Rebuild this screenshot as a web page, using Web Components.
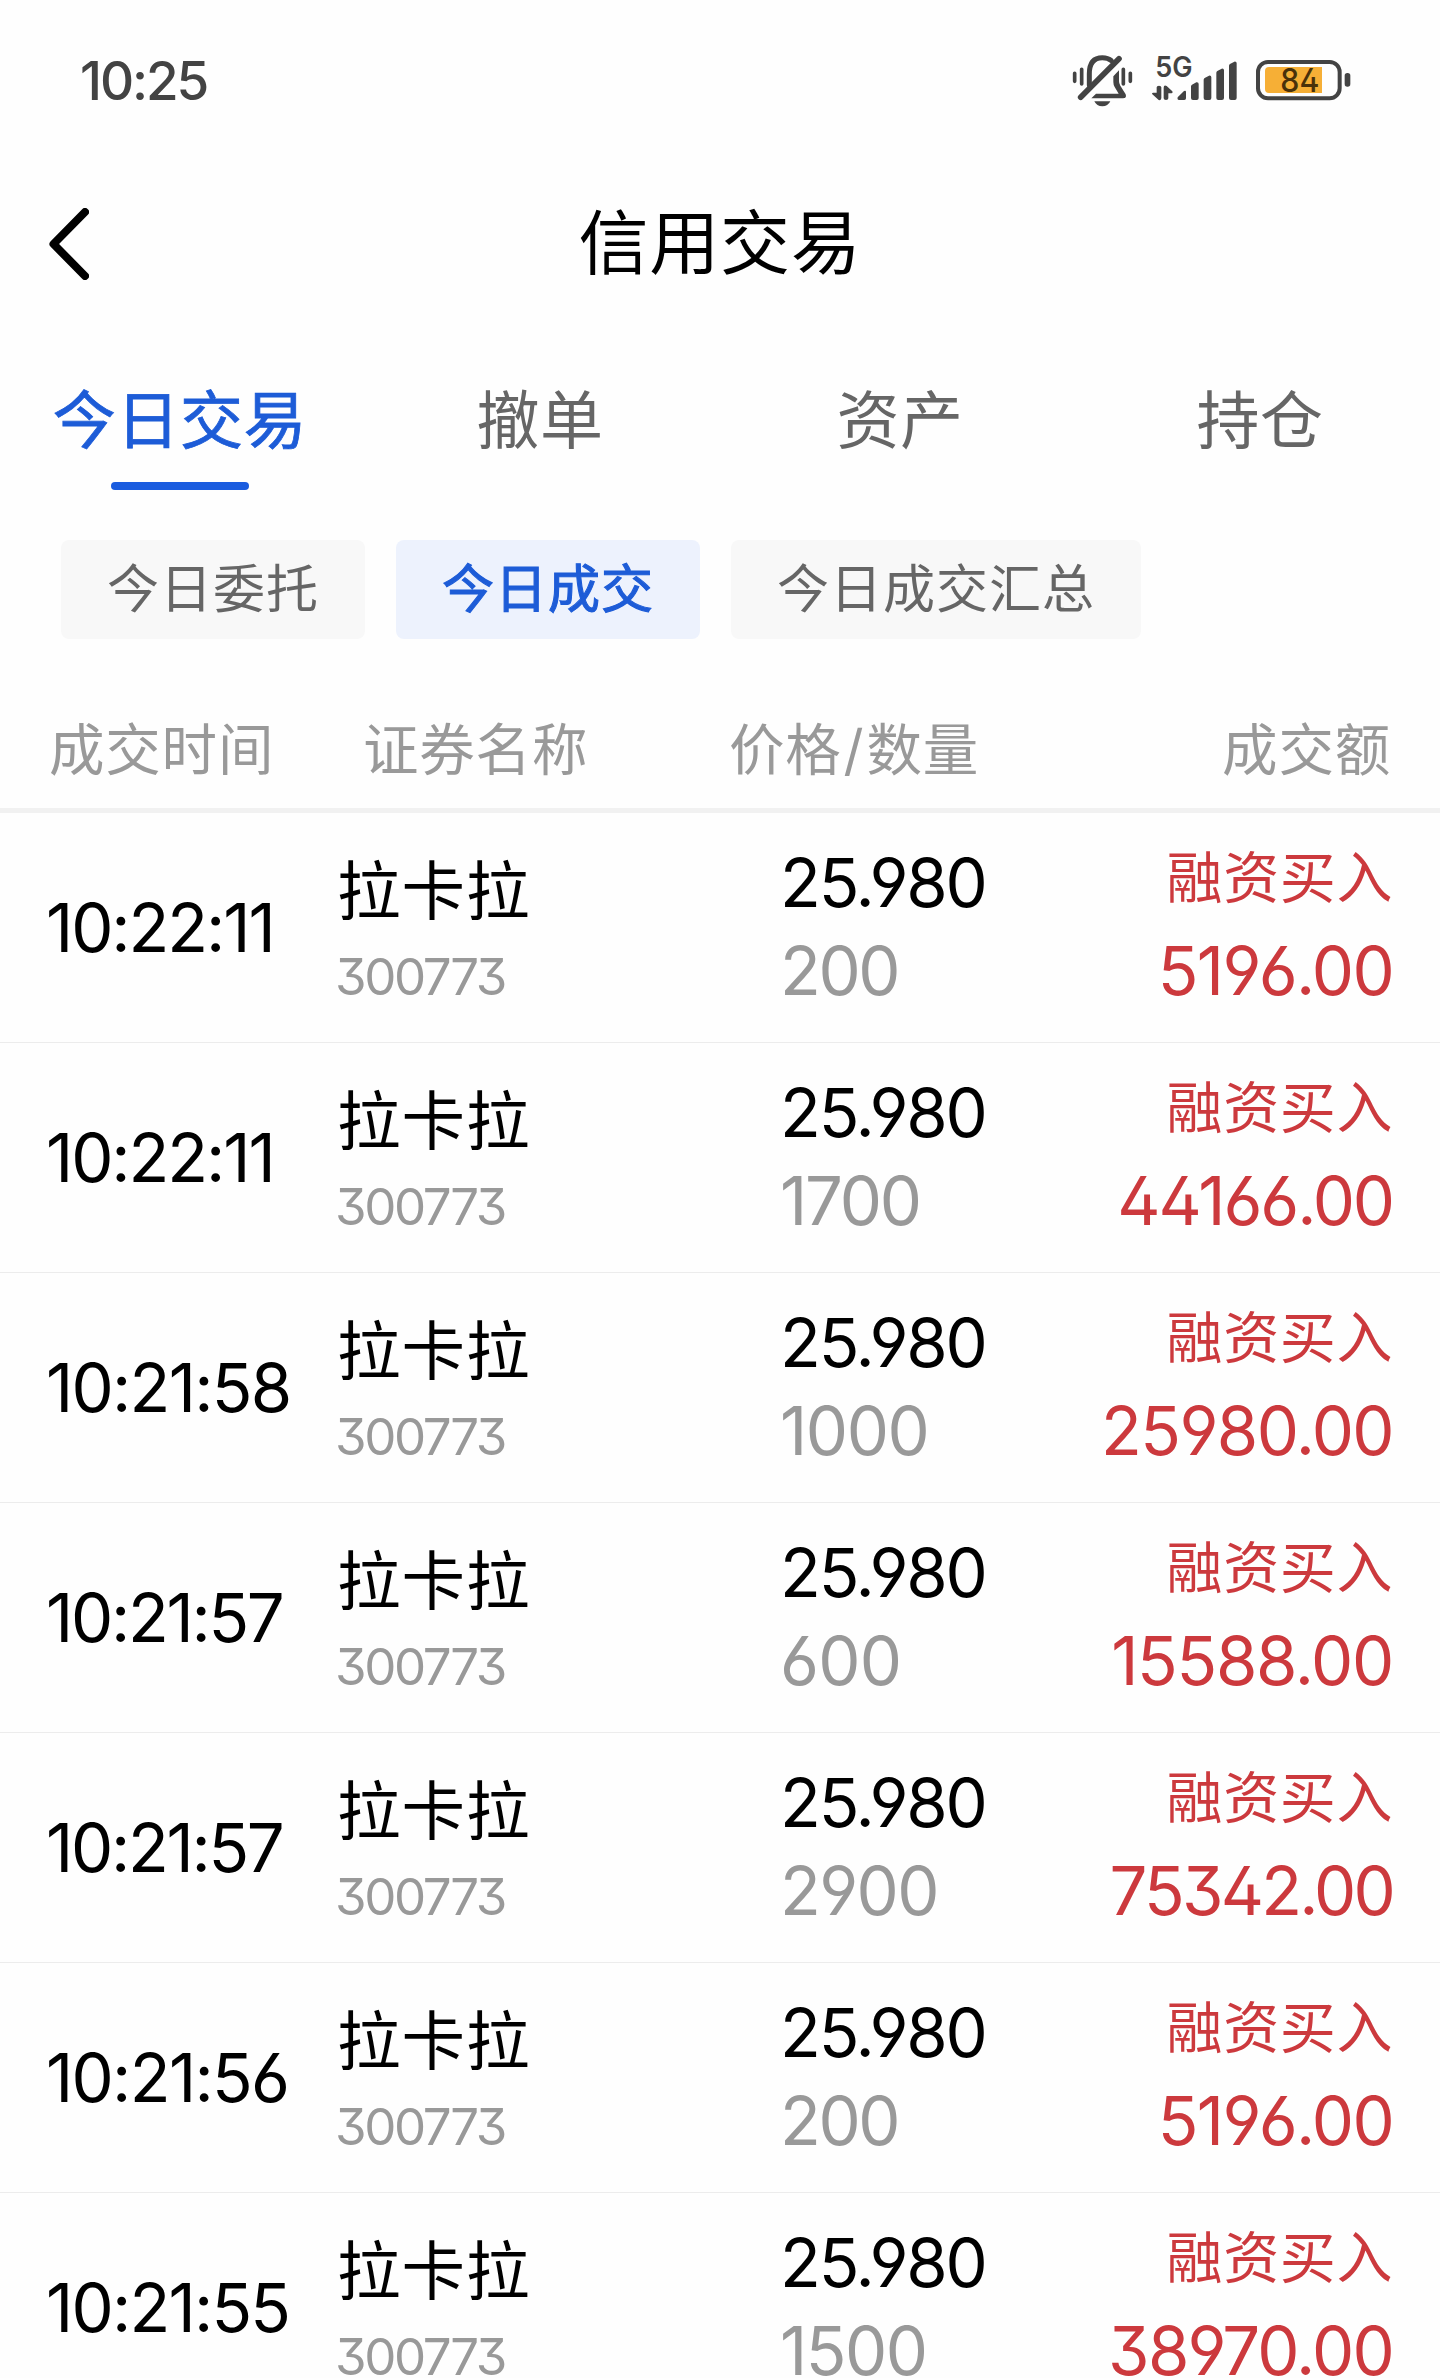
<!DOCTYPE html>
<html lang="zh-CN">
<head>
<meta charset="utf-8">
<title>信用交易</title>
<style>
html,body{margin:0;background:#fefefe}
body{height:2378px;overflow:hidden;font-family:Inter,"Noto Sans CJK SC",sans-serif;font-feature-settings:"ss01","cv05","cv06","cv09";color:#000;-webkit-font-smoothing:antialiased}
</style>
</head>
<body>
<trade-app></trade-app>
<script>
const define=(name,html)=>customElements.define(name,class extends HTMLElement{
  constructor(){super();this.attachShadow({mode:'open'});}
  connectedCallback(){this.shadowRoot.innerHTML=typeof html==='function'?html(this):html;}
});

define('status-bar',`<style>
:host{display:flex;height:160px;box-sizing:border-box;padding:40px 70px 0 80px;justify-content:space-between;color:#434343}
.clock{font-size:53px;font-weight:500;line-height:82px;letter-spacing:-2.1px}
svg{display:block;width:320px;height:80px}
text{font-family:Inter,sans-serif}
</style>
<span class="clock">10:25</span>
<svg viewBox="0 0 960 240" fill="#434343">
  <g fill="none" stroke="#434343" stroke-linecap="round" stroke-linejoin="round">
    <path d="M118 135V101Q118 53 157 53Q174 53 184 62" stroke-width="15"/>
    <path d="M92 172L207 56" stroke-width="17"/>
    <path d="M74 100V124M95 88V132M220 88V132M241 100V124" stroke-width="11"/>
  </g>
  <path d="M190 109L207 91V124Q207 131 211 137L227 163Q231 175 219 175H124L138 161H206L194 141Q190 134 190 126Z"/>
  <path d="M133 184H181Q174 199 157 199Q140 199 133 184Z"/>
  <text x="316" y="111" font-size="86" font-weight="600" textLength="112" lengthAdjust="spacingAndGlyphs">5G</text>
  <path d="M320 142Q320 137 327 137Q334 137 334 142V174Q334 182 326 180L307 163Q304 158 309 158H320ZM341 143Q341 134 350 138L367 154Q370 159 365 160H355V175Q355 180 348 180Q341 180 341 175Z"/>
  <path d="M383 172L402 153Q408 150 408 156V175Q408 180 403 180H387Q381 180 383 172ZM423 139Q423 136 426 134L439 127Q446 126 446 132V174Q446 180 440 180H429Q423 180 423 174ZM461 119Q461 116 464 114L477 107Q484 106 484 112V174Q484 180 478 180H467Q461 180 461 174ZM499 98Q499 95 502 93L515 86Q522 85 522 91V174Q522 180 516 180H505Q499 180 499 174ZM537 77Q537 74 540 72L553 65Q560 64 560 70V174Q560 180 554 180H543Q537 180 537 174Z"/>
  <rect x="624" y="66" width="245" height="109" rx="30" fill="none" stroke="#434343" stroke-width="12"/>
  <path d="M657 81H816V159H657Q645 159 645 147V93Q645 81 657 81Z" fill="#f6af36"/>
  <rect x="884" y="99" width="17" height="41" rx="8"/>
  <text x="691" y="156" font-size="97" font-weight="500" fill="#49310a" textLength="117" lengthAdjust="spacingAndGlyphs">84</text>
</svg>`);

define('nav-bar',`<style>
:host{display:grid;grid-template-columns:120px 1fr 120px;height:167px;margin-bottom:-2px;align-items:center}
svg{display:block;width:40px;height:72px;margin-left:49px}
h1{margin:0;text-align:center;font-size:70px;font-weight:400;line-height:100px;letter-spacing:.8px}
</style>
<svg viewBox="0 0 40 72" fill="none" stroke="#000" stroke-width="8" stroke-linecap="round" stroke-linejoin="round"><path d="M36 4L4.500 36L36 68"/></svg>
<h1><slot></slot></h1>`);

define('tab-item',`<style>
:host{display:flex;flex-direction:column;align-items:center;color:#666}
span{font-size:63px;line-height:100px;letter-spacing:.6px}
i{width:138px;height:8px;border-radius:4px;margin-top:12px}
:host([active]){color:#1d5cd7}
:host([active]) span{-webkit-text-stroke:.8px currentColor}
:host([active]) i{background:#1a5cdf}
</style><span><slot></slot></span><i></i>`);

define('tab-bar',`<style>
:host{display:grid;grid-template-columns:repeat(4,1fr);height:170px;padding-top:45px;box-sizing:border-box}
</style><slot></slot>`);

define('filter-chip',`<style>
:host{display:block;height:99px;line-height:99px;padding:0 46px;border-radius:8px;background:#f8f8f8;color:#666;font-size:52px;letter-spacing:1px}
:host([active]){background:#edf2fd;color:#1d5cd7;-webkit-text-stroke:1.1px currentColor}
</style><slot></slot>`);

define('filter-row',`<style>
:host{display:flex;gap:31px;padding:45px 61px 0;height:145px}
</style><slot></slot>`);

define('table-head',`<style>
:host{display:grid;grid-template-columns:314px 366px 1fr auto;padding:0 49px 0 49px;height:123px;line-height:129px;border-bottom:5px solid #f1f1f1;color:#999;font-size:55.500px;letter-spacing:.8px}
.price b{font-weight:400;padding:0 2px}
</style><span>成交时间</span><span>证券名称</span><span class="price">价格<b>/</b>数量</span><span>成交额</span>`);

define('trade-row',el=>{const a=n=>el.getAttribute(n);const [tt,tq,ta]=a('tracking').split(' ');return `<style>
:host{display:grid;grid-template-columns:291px 443px 1fr auto;height:229px;padding:0 47px 0 46px;border-bottom:1px solid #ececec;font-size:67px;white-space:nowrap}
.time{line-height:229px;height:229px;letter-spacing:${tt}px}
div{display:flex;flex-direction:column}
.stock{padding-top:34px}.name{font-size:63.500px;line-height:88px;letter-spacing:1px}
.code{font-size:51px;line-height:84px;color:#999;letter-spacing:-2.4px;margin-left:-2px}
.price{padding-top:26px;line-height:88px;letter-spacing:-2.1px}.qty{color:#999;letter-spacing:${tq}px}
.sum{padding-top:25px;align-items:flex-end;color:#cc393d}
.op{font-size:56px;line-height:80px;letter-spacing:.6px}.amt{line-height:106px;letter-spacing:${ta}px}
</style>
<span class="time">${a('time')}</span>
<div class="stock"><span class="name">${a('name')}</span><span class="code">${a('code')}</span></div>
<div class="price"><span>${a('price')}</span><span class="qty">${a('qty')}</span></div>
<div class="sum"><span class="op">${a('op')}</span><span class="amt">${a('amount')}</span></div>`});

const trades=[
  ['10:22:11','200','5196.00','-2.1 -2.4 -1.7'],
  ['10:22:11','1700','44166.00','-2.1 -2.2 -2.1'],
  ['10:21:58','1000','25980.00','-1.75 -1.4 -1.6'],
  ['10:21:57','600','15588.00','-2.3 -.8 -1.3'],
  ['10:21:57','2900','75342.00','-2.3 -1.6 -2.8'],
  ['10:21:56','200','5196.00','-1.7 -2.4 -1.7'],
  ['10:21:55','1500','38970.00','-1.8 -1.5 -1.75']];

define('trade-app',`<style>:host{display:block;width:1440px;height:2378px;overflow:hidden}</style>
<status-bar></status-bar>
<nav-bar>信用交易</nav-bar>
<tab-bar><tab-item active>今日交易</tab-item><tab-item>撤单</tab-item><tab-item>资产</tab-item><tab-item>持仓</tab-item></tab-bar>
<filter-row><filter-chip>今日委托</filter-chip><filter-chip active>今日成交</filter-chip><filter-chip>今日成交汇总</filter-chip></filter-row>
<table-head></table-head>
${trades.map(t=>`<trade-row time="${t[0]}" name="拉卡拉" code="300773" price="25.980" qty="${t[1]}" op="融资买入" amount="${t[2]}" tracking="${t[3]}"></trade-row>`).join('')}`);
</script>
</body>
</html>
